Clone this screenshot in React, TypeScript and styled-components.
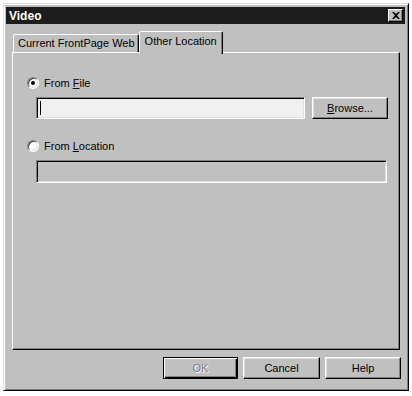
// classic "Video" dialog with two tabs

import styled, { createGlobalStyle } from "styled-components";

const Global = createGlobalStyle`
    body {
        margin: 0;
        background: #ffffff;
        font-family: "Liberation Sans", Arial, sans-serif;
        font-size: 11px;
        color: #000;
    }
`;

// outer window frame
const Window = styled.div`
    box-sizing: border-box;
    margin: 3px 0 0 3px;
    width: 406px;
    height: 388px;
    background: #c0c0c0;
    border: 1px solid;
    border-color: #dfdfdf #000 #000 #dfdfdf;
    box-shadow: inset 1px 1px #fff, inset -1px -1px #808080;
    padding: 3px 3px 2px 2px;
    display: flex;
    flex-direction: column;
`;

const TitleBar = styled.div`
    height: 17px;
    background: #1c1c1c;
    display: flex;
    align-items: center;
    justify-content: space-between;
    padding: 0 2px 0 3px;
`;

const Title = styled.span`
    color: #fff;
    font-weight: bold;
    font-size: 12px;
`;

const CloseBtn = styled.div`
    box-sizing: border-box;
    width: 15px;
    height: 13px;
    background: #c0c0c0;
    border: 1px solid;
    border-color: #fff #000 #000 #fff;
    box-shadow: inset -1px -1px #808080;
    display: flex;
    align-items: center;
    justify-content: center;
`;

const Body = styled.div`
    padding: 7px 0 0 6px;
    display: flex;
    flex-direction: column;
`;

const TabStrip = styled.div`
    display: flex;
    align-items: flex-end;
    height: 21px;
    padding-left: 1px;
`;

// a single tab; selected one is taller and covers the panel edge
const Tab = styled.div<{ $active?: boolean }>`
    box-sizing: border-box;
    height: ${(p) => (p.$active ? "23px" : "18px")};
    margin-bottom: ${(p) => (p.$active ? "-2px" : "0")};
    padding: ${(p) => (p.$active ? "3px 5px 0 5px" : "2px 3px 0 4px")};
    background: #c0c0c0;
    border: 1px solid;
    border-bottom: none;
    border-color: #fff #000 transparent #fff;
    border-radius: 2px 2px 0 0;
    box-shadow: inset -1px 0 #808080;
    position: relative;
    z-index: ${(p) => (p.$active ? 1 : 0)};
    white-space: nowrap;
`;

const Panel = styled.div`
    box-sizing: border-box;
    width: 388px;
    height: 298px;
    border: 1px solid;
    border-color: #fff #000 #000 #fff;
    box-shadow: inset -1px -1px #808080;
    padding: 24px 0 0 14px;
    display: flex;
    flex-direction: column;
`;

const RadioRow = styled.label<{ $top: number }>`
    display: flex;
    align-items: center;
    gap: 5px;
    height: 12px;
    margin-top: ${(p) => p.$top}px;
`;

const RadioDot = styled.span<{ $checked?: boolean }>`
    box-sizing: border-box;
    width: 12px;
    height: 12px;
    border-radius: 50%;
    border: 1px solid;
    border-color: #808080 #fff #fff #808080;
    background: #fff;
    box-shadow: inset 1px 1px #404040, inset -1px -1px #dfdfdf;
    display: flex;
    align-items: center;
    justify-content: center;
    &::after {
        content: "";
        display: ${(p) => (p.$checked ? "block" : "none")};
        width: 4px;
        height: 4px;
        border-radius: 50%;
        background: #000;
    }
`;

const FieldRow = styled.div<{ $top: number }>`
    display: flex;
    gap: 7px;
    margin: ${(p) => p.$top}px 0 0 9px;
`;

const Field = styled.div<{ $width: number; $height: number; $disabled?: boolean }>`
    box-sizing: border-box;
    width: ${(p) => p.$width}px;
    height: ${(p) => p.$height}px;
    background: ${(p) => (p.$disabled ? "#c0c0c0" : "#f0f0f0")};
    border: 1px solid;
    border-color: #808080 #fff #fff #808080;
    box-shadow: inset 1px 1px #000, inset -1px -1px #dfdfdf;
    padding: 3px 0 0 3px;
`;

const Caret = styled.div`
    width: 1px;
    height: 14px;
    background: #000;
`;

const Button = styled.div<{ $width: number; $default?: boolean; $disabled?: boolean }>`
    box-sizing: border-box;
    width: ${(p) => p.$width}px;
    height: 22px;
    background: #c0c0c0;
    border: 1px solid;
    border-color: ${(p) => (p.$default ? "#000" : "#fff #000 #000 #fff")};
    box-shadow: ${(p) =>
        p.$default
            ? "inset 1px 1px #fff, inset -1px -1px #000, inset -2px -2px #808080"
            : "inset -1px -1px #808080, inset 1px 1px #dfdfdf"};
    display: flex;
    align-items: center;
    justify-content: center;
    color: ${(p) => (p.$disabled ? "#808080" : "#000")};
    text-shadow: ${(p) => (p.$disabled ? "1px 1px #fff" : "none")};
`;

const ButtonRow = styled.div`
    display: flex;
    justify-content: flex-end;
    gap: 5px;
    margin-top: 7px;
    width: 389px;
`;

const Key = styled.span`
    text-decoration: underline;
`;

export default function App() {
    return (
        <>
            <Global />
            <Window>
                <TitleBar>
                    <Title>Video</Title>
                    <CloseBtn>
                        <svg width="8" height="7" viewBox="0 0 8 7">
                            <path d="M0 0h2l2 2 2-2h2L5 3.5 8 7H6L4 5 2 7H0l3-3.5z" fill="#000" />
                        </svg>
                    </CloseBtn>
                </TitleBar>
                <Body>
                    <TabStrip>
                        <Tab>Current FrontPage Web</Tab>
                        <Tab $active>Other Location</Tab>
                    </TabStrip>
                    <Panel>
                        <RadioRow $top={0}>
                            <RadioDot $checked />
                            <span>From <Key>F</Key>ile</span>
                        </RadioRow>
                        <FieldRow $top={8}>
                            <Field $width={269} $height={22}>
                                <Caret />
                            </Field>
                            <Button $width={76}>
                                <span><Key>B</Key>rowse...</span>
                            </Button>
                        </FieldRow>
                        <RadioRow $top={21}>
                            <RadioDot />
                            <span>From <Key>L</Key>ocation</span>
                        </RadioRow>
                        <FieldRow $top={8}>
                            <Field $width={351} $height={23} $disabled />
                        </FieldRow>
                    </Panel>
                    <ButtonRow>
                        <Button $width={75} $default $disabled>OK</Button>
                        <Button $width={77}>Cancel</Button>
                        <Button $width={76}>Help</Button>
                    </ButtonRow>
                </Body>
            </Window>
        </>
    );
}
